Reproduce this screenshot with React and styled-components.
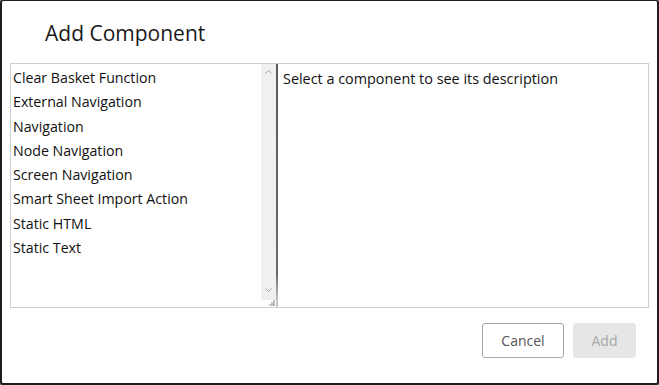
import React from "react";
import styled, { createGlobalStyle } from "styled-components";

const componentsData = [
  "Clear Basket Function",
  "External Navigation",
  "Navigation",
  "Node Navigation",
  "Screen Navigation",
  "Smart Sheet Import Action",
  "Static HTML",
  "Static Text",
];

const GlobalStyle = createGlobalStyle`
  html, body {
    margin: 0;
    padding: 0;
    background: #8a8a8a;
  }
  * {
    box-sizing: border-box;
  }
`;

function Chevron({ up }) {
  return (
    <svg width="7" height="4" viewBox="0 0 7 4">
      <path
        d={up ? "M0.5 3.5 L3.5 0.5 L6.5 3.5" : "M0.5 0.5 L3.5 3.5 L6.5 0.5"}
        fill="none"
        stroke="#a3a3a3"
        strokeWidth="1"
      />
    </svg>
  );
}

function Grip() {
  return (
    <svg width="7" height="7" viewBox="0 0 7 7">
      <rect x="5" y="1" width="2" height="2" fill="#bcbcbc" />
      <rect x="3" y="3" width="2" height="2" fill="#c8c8c8" />
      <rect x="5" y="3" width="2" height="2" fill="#bcbcbc" />
      <rect x="1" y="5" width="2" height="2" fill="#c8c8c8" />
      <rect x="3" y="5" width="2" height="2" fill="#bcbcbc" />
      <rect x="5" y="5" width="2" height="2" fill="#b0b0b0" />
    </svg>
  );
}

export default function App() {
  return (
    <>
      <GlobalStyle />
      <Dialog>
        <Title>Add Component</Title>
        <Body>
          <ListPane>
            <List>
              {componentsData.map((name) => (
                <Item key={name}>{name}</Item>
              ))}
            </List>
            <Track>
              <Chevron up />
              <Chevron />
            </Track>
            <GripSpot>
              <Grip />
            </GripSpot>
          </ListPane>
          <Splitter />
          <Description>Select a component to see its description</Description>
        </Body>
        <Footer>
          <Button>Cancel</Button>
          <Button primary disabled>
            Add
          </Button>
        </Footer>
      </Dialog>
    </>
  );
}

const Dialog = styled.div`
  width: 659px;
  height: 385px;
  background: #ffffff;
  border: 2px solid #1e1e1e;
  border-top-width: 1px;
  border-radius: 3px;
  display: flex;
  flex-direction: column;
  font-family: "Open Sans", "Noto Sans", sans-serif;
  color: #111;
`;

const Title = styled.h1`
  margin: 0;
  padding: 18px 0 0 43px;
  height: 62px;
  font-size: 21px;
  font-weight: 400;
  line-height: 28px;
  color: #1a1a1a;
`;

const Body = styled.div`
  margin: 0 8px;
  height: 245px;
  border: 1px solid #cfcfcf;
  display: flex;
`;

const ListPane = styled.div`
  position: relative;
  width: 265px;
  display: flex;
`;

const List = styled.div`
  flex: 1;
  padding: 2px 0 0 2px;
`;

const Item = styled.div`
  font-size: 14.2px;
  line-height: 24.3px;
  white-space: nowrap;
`;

const Track = styled.div`
  width: 15px;
  height: 236px;
  background: #f0f0f0;
  display: flex;
  flex-direction: column;
  justify-content: space-between;
  align-items: center;
  padding: 6px 0 8px;
`;

const GripSpot = styled.div`
  position: absolute;
  right: 1px;
  bottom: 1px;
  display: flex;
`;

const Splitter = styled.div`
  width: 2px;
  background: linear-gradient(#5a5a5a 0, #6a6a6a 210px, #c4c4c4 236px);
`;

const Description = styled.div`
  flex: 1;
  padding: 5px 0 0 5px;
  font-size: 14.4px;
  line-height: 20px;
  white-space: nowrap;
`;

const Footer = styled.div`
  display: flex;
  justify-content: flex-end;
  gap: 9px;
  padding: 15px 21px 0 0;
`;

const Button = styled.button`
  height: 35px;
  min-width: ${(p) => (p.primary ? "63px" : "82px")};
  padding: 0 16px;
  border: 1px solid ${(p) => (p.primary ? "#e6e6e6" : "#a6a6a6")};
  border-radius: 3px;
  background: ${(p) => (p.primary ? "#e6e6e6" : "#ffffff")};
  color: ${(p) => (p.primary ? "#a8a8a8" : "#555")};
  font-family: "Open Sans", "Noto Sans", sans-serif;
  font-size: 14px;
  cursor: pointer;
`;
